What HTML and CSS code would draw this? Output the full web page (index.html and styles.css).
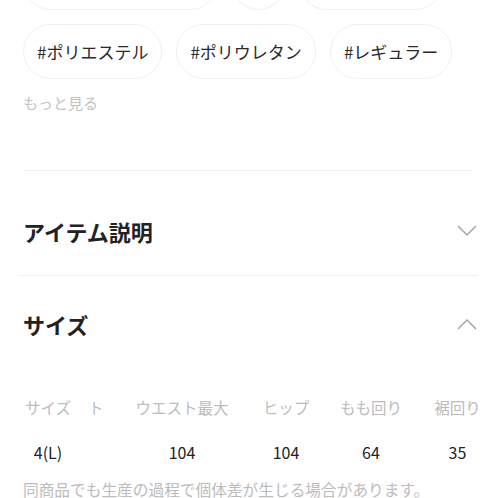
FILE: index.html
```html
<!DOCTYPE html>
<html lang="ja">
<head>
    <meta charset="UTF-8">
    <meta name="viewport" content="width=device-width, initial-scale=1.0">
    <title>アイテム詳細</title>
    <link rel="stylesheet" href="styles.css">
</head>
<body>
    <div class="detail">
        <div class="tagArea">
            <ul class="tags">
                <li class="tag tag-l">#センタープレス</li>
                <li class="tag tag-s">#春</li>
                <li class="tag tag-m">#きれいめパンツ</li>
                <li class="tag">#ポリエステル</li>
                <li class="tag">#ポリウレタン</li>
                <li class="tag">#レギュラー</li>
            </ul>
            <a class="more" href="#">もっと見る</a>
        </div>

        <div class="line line-first"></div>

        <div class="acc">
            <div class="acc-head">
                <h2 class="acc-title">アイテム説明</h2>
                <svg class="acc-arrow" width="20" height="12" viewBox="0 0 20 12">
                    <polyline points="1,1 10,10 19,1" fill="none" stroke="#a6a6a6" stroke-width="1.5"/>
                </svg>
            </div>
        </div>

        <div class="line"></div>

        <div class="acc">
            <div class="acc-head">
                <h2 class="acc-title">サイズ</h2>
                <svg class="acc-arrow" width="20" height="12" viewBox="0 0 20 12">
                    <polyline points="1,11 10,2 19,11" fill="none" stroke="#a6a6a6" stroke-width="1.5"/>
                </svg>
            </div>
            <div class="sizeTable">
                <div class="cell th">サイズ</div>
                <div class="cell th">ト</div>
                <div class="cell th">ウエスト最大</div>
                <div class="cell th">ヒップ</div>
                <div class="cell th">もも回り</div>
                <div class="cell th">裾回り</div>

                <div class="cell td">4(L)</div>
                <div class="cell td"></div>
                <div class="cell td">104</div>
                <div class="cell td">104</div>
                <div class="cell td">64</div>
                <div class="cell td">35</div>
            </div>
            <p class="note">同商品でも生産の過程で個体差が生じる場合があります。</p>
        </div>
    </div>
</body>
</html>
```

FILE: styles.css
```css
*{
    padding: 0;
    margin: 0;
    box-sizing: border-box;
}
ul li{
    list-style: none;
}
html,body{
    height: 100%;
    overflow: hidden;
}
body{
    background-color: #fff;
    font-family: "Noto Sans CJK JP", "Noto Sans", sans-serif;
    color: #222;
}

.detail{
    padding: 0 23px;
}

/* tags */
.tags{
    display: flex;
    flex-wrap: wrap;
    gap: 14px;
    margin-top: -45px;
}
.tags .tag{
    height: 55px;
    line-height: 53px;
    padding: 0 13px;
    border: 1px solid #f0f0f0;
    border-radius: 28px;
    font-size: 17px;
    color: #2a2a2a;
    text-align: center;
    white-space: nowrap;
    overflow: hidden;
}
.tags .tag-l{
    width: 195px;
}
.tags .tag-s{
    width: 53px;
}
.tags .tag-m{
    width: 144px;
}
.more{
    display: block;
    margin-top: 14px;
    line-height: 20px;
    font-size: 15px;
    color: #c2c2c2;
    text-decoration: none;
}

.line{
    height: 1px;
    background-color: #f0f0f0;
    margin-right: -3px;
    margin-left: -3px;
}
.line-first{
    margin-top: 57px;
    margin-bottom: 12px;
    margin-left: 0;
    margin-right: 3px;
}

/* accordion */
.acc-head{
    display: flex;
    align-items: center;
    justify-content: space-between;
    padding: 32px 0 28px;
}
.acc-title{
    font-size: 22px;
    line-height: 32px;
    font-weight: 700;
    color: #222;
}
.acc-arrow{
    display: block;
    margin-right: -2px;
}

/* size table */
.sizeTable{
    display: grid;
    grid-template-columns: 50px 46px 126px 82px 88px 85px;
    grid-auto-rows: 45px;
    margin-top: 16px;
    width: max-content;
}
.sizeTable .cell{
    display: flex;
    align-items: center;
    justify-content: center;
    white-space: nowrap;
}
.sizeTable .th{
    font-size: 15.5px;
    color: #bcbcbc;
}
.sizeTable .td{
    font-size: 16px;
    color: #222;
}
.note{
    margin-top: 5px;
    line-height: 22px;
    font-size: 15.7px;
    color: #bcbcbc;
    white-space: nowrap;
}
```
